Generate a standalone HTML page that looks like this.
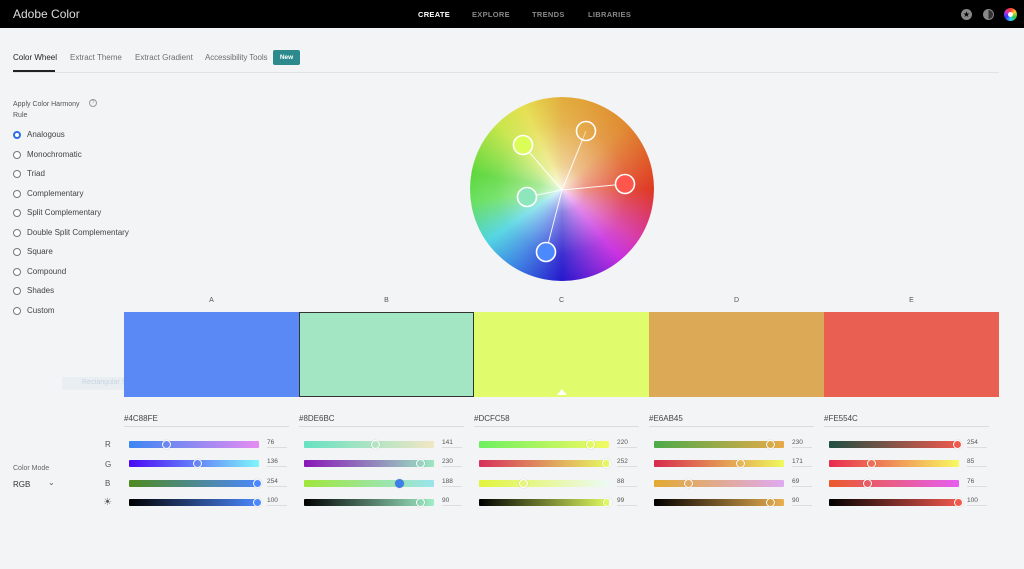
<!DOCTYPE html>
<html><head><meta charset="utf-8"><style>
*{margin:0;padding:0;box-sizing:border-box}
body{width:1024px;height:569px;background:#f3f4f5;font-family:"Liberation Sans",sans-serif;position:relative;overflow:hidden;color:#2c2c2c}
.a{position:absolute}
.nav{left:0;top:0;width:1024px;height:28px;background:#000}
.tab{top:53px;font-size:8px;color:#6e6e6e}
.radio{left:13px;font-size:8px;color:#444}
.radio i{position:absolute;left:0;top:0;width:8px;height:8px;border:1px solid #777;border-radius:50%;background:#fff}
.radio span{position:absolute;left:14px;top:-1px;white-space:nowrap}
.sl{height:7px;width:130px;border-radius:1px}
.th{width:9px;height:9px;border:1.3px solid #fff;border-radius:50%;box-shadow:0 0 1px rgba(0,0,0,.3)}
.v{font-size:6.5px;color:#555;border-bottom:1px solid #ddd;width:20px;padding-bottom:1px}
.hx{font-size:8px;color:#444;width:165px;border-bottom:1px solid #dcdcdc;padding-bottom:3px}
.lb{font-size:7px;color:#555;width:175px;text-align:center;top:297px}
.rl{left:105px;font-size:8px;color:#555}
</style></head><body>
<div class="a nav"></div>
<div class="a" style="left:13px;top:7px;color:#ddd;font-size:12px">Adobe Color</div>
<div class="a" style="left:418px;top:10px;font-size:7.5px;font-weight:bold;color:#fff;letter-spacing:.3px">CREATE</div>
<div class="a" style="left:472px;top:10px;font-size:7.5px;font-weight:bold;color:#888;letter-spacing:.3px">EXPLORE</div>
<div class="a" style="left:532px;top:10px;font-size:7.5px;font-weight:bold;color:#888;letter-spacing:.3px">TRENDS</div>
<div class="a" style="left:588px;top:10px;font-size:7.5px;font-weight:bold;color:#888;letter-spacing:.3px">LIBRARIES</div>
<div class="a" style="left:961px;top:9px;width:11px;height:11px;border-radius:50%;background:#888;color:#000;font-size:8px;line-height:11px;text-align:center">★</div>
<div class="a" style="left:983px;top:9px;width:11px;height:11px;border-radius:50%;background:linear-gradient(90deg,#888 50%,#333 50%);border:1px solid #888"></div>
<div class="a" style="left:1004px;top:8px;width:13px;height:13px;border-radius:50%;background:conic-gradient(#f33,#fc3,#3c3,#3cf,#33f,#c3c,#f33)"></div>
<div class="a" style="left:1008px;top:12px;width:5px;height:5px;border-radius:50%;background:#fff"></div>

<div class="a tab" style="left:13px;color:#222">Color Wheel</div>
<div class="a" style="left:13px;top:70px;width:42px;height:2px;background:#222"></div>
<div class="a tab" style="left:70px">Extract Theme</div>
<div class="a tab" style="left:135px">Extract Gradient</div>
<div class="a tab" style="left:205px;letter-spacing:-.1px">Accessibility Tools</div>
<div class="a" style="left:273px;top:50px;width:27px;height:15px;background:#2d8a8c;border-radius:2px;color:#fff;font-size:6.5px;font-weight:bold;text-align:center;line-height:15px">New</div>
<div class="a" style="left:13px;top:72px;width:986px;height:1px;background:#e2e2e2"></div>

<div class="a" style="left:13px;top:99px;font-size:7px;color:#555;line-height:11px">Apply Color Harmony<br>Rule</div>
<div class="a" style="left:89px;top:99px;width:8px;height:8px;border:1px solid #999;border-radius:50%;font-size:5px;color:#999;text-align:center;line-height:6px">?</div>

<div class="a radio" style="top:131px"><i style="border:2.5px solid #2a6ee8"></i><span>Analogous</span></div>
<div class="a radio" style="top:151px"><i></i><span>Monochromatic</span></div>
<div class="a radio" style="top:170px"><i></i><span>Triad</span></div>
<div class="a radio" style="top:190px"><i></i><span>Complementary</span></div>
<div class="a radio" style="top:209px"><i></i><span>Split Complementary</span></div>
<div class="a radio" style="top:229px"><i></i><span>Double Split Complementary</span></div>
<div class="a radio" style="top:248px"><i></i><span>Square</span></div>
<div class="a radio" style="top:268px"><i></i><span>Compound</span></div>
<div class="a radio" style="top:287px"><i></i><span>Shades</span></div>
<div class="a radio" style="top:307px"><i></i><span>Custom</span></div>

<div class="a" style="left:62px;top:377px;width:106px;height:13px;background:#e9eef3;font-size:7px;color:#c8d4e0;padding:2px 0 0 20px">Rectangular Strip</div>

<!-- wheel -->
<div class="a" style="left:470px;top:97px;width:184px;height:184px;border-radius:50%;background:conic-gradient(from 0deg,#e2ad3c,#e08a30 45deg,#df3822 90deg,#d63ab0 125deg,#c72ee0 140deg,#2518cc 180deg,#3b7fe2 210deg,#50d4e2 235deg,#6ae060 262deg,#5fd83e 280deg,#c8e64a 315deg,#e6df52 335deg,#e2ad3c)"></div>
<div class="a" style="left:470px;top:97px;width:184px;height:184px;border-radius:50%;background:radial-gradient(circle at 50% 50%,rgba(255,255,255,.85) 0,rgba(255,255,255,.45) 18%,rgba(255,255,255,.1) 50%,rgba(255,255,255,0) 70%)"></div>
<svg class="a" style="left:0;top:0" width="1024" height="569"><g stroke="#fff" stroke-width="1" opacity=".9"><line x1="562" y1="190" x2="523" y2="145"/><line x1="562" y1="190" x2="586" y2="131"/><line x1="562" y1="190" x2="625" y2="184"/><line x1="562" y1="190" x2="527" y2="197"/><line x1="562" y1="190" x2="546" y2="252"/></g>
<g stroke="#fff" stroke-width="1.6"><circle cx="523" cy="145" r="9.5" fill="#dcfc58"/><circle cx="586" cy="131" r="9.5" fill="#e6ab45" fill-opacity=".4"/><circle cx="625" cy="184" r="9.5" fill="#fe554c"/><circle cx="527" cy="197" r="9.5" fill="#8de6bc"/><circle cx="546" cy="252" r="9.5" fill="#4c88fe"/></g></svg>

<div class="a lb" style="left:124px">A</div>
<div class="a lb" style="left:299px">B</div>
<div class="a lb" style="left:474px">C</div>
<div class="a lb" style="left:649px">D</div>
<div class="a lb" style="left:824px">E</div>
<div class="a" style="left:124px;top:312px;width:175px;height:85px;background:#5a88f4"></div>
<div class="a" style="left:299px;top:312px;width:175px;height:85px;background:#a3e6c4;border:1px solid #333"></div>
<div class="a" style="left:474px;top:312px;width:175px;height:85px;background:#e0fb6c"></div>
<div class="a" style="left:649px;top:312px;width:175px;height:85px;background:#dca956"></div>
<div class="a" style="left:824px;top:312px;width:175px;height:85px;background:#e96052"></div>
<div class="a" style="left:557px;top:389px;width:0;height:0;border-left:5px solid transparent;border-right:5px solid transparent;border-bottom:6px solid #fff"></div>

<div class="a hx" style="left:124px;top:414px">#4C88FE</div>
<div class="a hx" style="left:299px;top:414px">#8DE6BC</div>
<div class="a hx" style="left:474px;top:414px">#DCFC58</div>
<div class="a hx" style="left:649px;top:414px">#E6AB45</div>
<div class="a hx" style="left:824px;top:414px">#FE554C</div>

<div class="a rl" style="top:440px">R</div>
<div class="a rl" style="top:460px">G</div>
<div class="a rl" style="top:479px">B</div>
<div class="a rl" style="top:497px;left:103px;font-size:10px">☀</div>
<div class="a" style="left:13px;top:465px;font-size:7px;color:#666">Color Mode</div>
<div class="a" style="left:13px;top:480px;font-size:8px;color:#333">RGB</div>
<div class="a" style="left:48px;top:478px;font-size:8px;color:#555">⌄</div>

<!-- A -->
<div class="a sl" style="left:129px;top:441px;background:linear-gradient(90deg,#3b86f2,#e68cf2)"></div><div class="a th" style="left:162px;top:440px"></div><div class="a v" style="left:267px;top:439px">76</div>
<div class="a sl" style="left:129px;top:460px;background:linear-gradient(90deg,#4a08f6,#7ef6fa)"></div><div class="a th" style="left:193px;top:459px"></div><div class="a v" style="left:267px;top:458px">136</div>
<div class="a sl" style="left:129px;top:480px;background:linear-gradient(90deg,#4e8a1e,#4c88fe)"></div><div class="a th" style="left:253px;top:479px;background:#4c88fe"></div><div class="a v" style="left:267px;top:478px">254</div>
<div class="a sl" style="left:129px;top:499px;background:linear-gradient(90deg,#000,#4c88fe)"></div><div class="a th" style="left:253px;top:498px;background:#4c88fe"></div><div class="a v" style="left:267px;top:497px">100</div>
<!-- B -->
<div class="a sl" style="left:304px;top:441px;background:linear-gradient(90deg,#66e2c2,#f2e6c4)"></div><div class="a th" style="left:371px;top:440px"></div><div class="a v" style="left:442px;top:439px">141</div>
<div class="a sl" style="left:304px;top:460px;background:linear-gradient(90deg,#8a16b8,#9ae8c0)"></div><div class="a th" style="left:416px;top:459px"></div><div class="a v" style="left:442px;top:458px">230</div>
<div class="a sl" style="left:304px;top:480px;background:linear-gradient(90deg,#a0e63a,#9ae4ee)"></div><div class="a th" style="left:395px;top:479px;background:#3f7de8;border-color:#3f7de8"></div><div class="a v" style="left:442px;top:478px">188</div>
<div class="a sl" style="left:304px;top:499px;background:linear-gradient(90deg,#000,#a0eec8)"></div><div class="a th" style="left:416px;top:498px"></div><div class="a v" style="left:442px;top:497px">90</div>
<!-- C -->
<div class="a sl" style="left:479px;top:441px;background:linear-gradient(90deg,#6cf060,#f4fa62)"></div><div class="a th" style="left:586px;top:440px"></div><div class="a v" style="left:617px;top:439px">220</div>
<div class="a sl" style="left:479px;top:460px;background:linear-gradient(90deg,#d8305c,#e6fa60)"></div><div class="a th" style="left:602px;top:459px"></div><div class="a v" style="left:617px;top:458px">252</div>
<div class="a sl" style="left:479px;top:480px;background:linear-gradient(90deg,#e2f43a,#ecfaf6)"></div><div class="a th" style="left:519px;top:479px"></div><div class="a v" style="left:617px;top:478px">88</div>
<div class="a sl" style="left:479px;top:499px;background:linear-gradient(90deg,#000,#e0fb60)"></div><div class="a th" style="left:603px;top:498px"></div><div class="a v" style="left:617px;top:497px">99</div>
<!-- D -->
<div class="a sl" style="left:654px;top:441px;background:linear-gradient(90deg,#4caa4a,#e8aa48)"></div><div class="a th" style="left:766px;top:440px"></div><div class="a v" style="left:792px;top:439px">230</div>
<div class="a sl" style="left:654px;top:460px;background:linear-gradient(90deg,#d82a4e,#eefa5c)"></div><div class="a th" style="left:736px;top:459px"></div><div class="a v" style="left:792px;top:458px">171</div>
<div class="a sl" style="left:654px;top:480px;background:linear-gradient(90deg,#e2aa30,#e0aaf2)"></div><div class="a th" style="left:684px;top:479px"></div><div class="a v" style="left:792px;top:478px">69</div>
<div class="a sl" style="left:654px;top:499px;background:linear-gradient(90deg,#000,#eab050)"></div><div class="a th" style="left:766px;top:498px"></div><div class="a v" style="left:792px;top:497px">90</div>
<!-- E -->
<div class="a sl" style="left:829px;top:441px;background:linear-gradient(90deg,#1e5042,#f0584e)"></div><div class="a th" style="left:953px;top:440px;background:#f0584e"></div><div class="a v" style="left:967px;top:439px">254</div>
<div class="a sl" style="left:829px;top:460px;background:linear-gradient(90deg,#e82a50,#f8fa60)"></div><div class="a th" style="left:867px;top:459px"></div><div class="a v" style="left:967px;top:458px">85</div>
<div class="a sl" style="left:829px;top:480px;background:linear-gradient(90deg,#ea5a2a,#e65ef2)"></div><div class="a th" style="left:863px;top:479px"></div><div class="a v" style="left:967px;top:478px">76</div>
<div class="a sl" style="left:829px;top:499px;background:linear-gradient(90deg,#000,#f0584e)"></div><div class="a th" style="left:954px;top:498px;background:#f0584e"></div><div class="a v" style="left:967px;top:497px">100</div>
</body></html>
